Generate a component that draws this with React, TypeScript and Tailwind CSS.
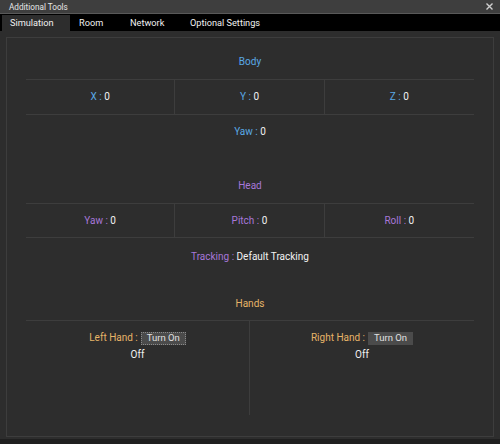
import React from "react";

const font = { fontFamily: 'Roboto, "Liberation Sans", Arial, sans-serif' };

function Field({ label, value, color }: { label: string; value: string; color: string }) {
  return (
    <span className="whitespace-nowrap">
      <span className={color}>{label} : </span>
      <span className="text-[#f2f2f2]">{value}</span>
    </span>
  );
}

function TurnOnButton({ focused }: { focused?: boolean }) {
  return (
    <span
      className={`ml-[3px] inline-flex h-[13px] w-[45px] items-center justify-center bg-[#4b4b4b] text-[9.5px] text-[#e0e0e0] ${
        focused ? "border border-dotted border-[#8a8a8a]" : "border border-[#4b4b4b]"
      }`}
    >
      Turn On
    </span>
  );
}

export default function App() {
  const blue = "text-[#5aa9e6]";
  const purple = "text-[#a777d9]";
  const gold = "text-[#e6b468]";

  return (
    <div className="w-[500px] h-[444px] bg-[#2d2d2d] flex flex-col overflow-hidden text-[10px] leading-[14px]" style={font}>
      {/* Title bar */}
      <div className="h-[14px] shrink-0 bg-[#3e3e3e] border-b border-[#595959] flex items-center justify-between pl-[9px] pr-[7px]">
        <span className="text-[8.2px] leading-[12px] text-[#e6e6e6]">Additional Tools</span>
        <svg width="7" height="7" viewBox="0 0 7 7" className="mt-[-1px]">
          <path d="M0.5 0.5 L6.5 6.5 M6.5 0.5 L0.5 6.5" stroke="#cfcfcf" strokeWidth="1.4" />
        </svg>
      </div>

      {/* Tabs */}
      <div className="h-[17px] shrink-0 bg-black flex items-end pl-[2px] text-[9.2px] text-[#f0f0f0]">
        <div className="h-[16px] w-[68px] bg-[#2d2d2d] pl-[8px] flex items-center">Simulation</div>
        <div className="h-[16px] w-[51px] pl-[9px] flex items-center">Room</div>
        <div className="h-[16px] w-[60px] pl-[9px] flex items-center">Network</div>
        <div className="h-[16px] pl-[9px] flex items-center">Optional Settings</div>
      </div>

      {/* Content */}
      <div className="flex-1 px-[6px] pt-[6px] pb-[2px] flex flex-col">
        <div className="flex-1 border border-[#3d3d3d] px-[19px] text-center">
          {/* Body */}
          <div className={`h-[41px] pt-[17px] ${blue}`}>Body</div>
          <div className="grid grid-cols-3 h-[36px] border-y border-[#3d3d3d]">
            <div className="flex items-center justify-center border-r border-[#3d3d3d]">
              <Field label="X" value="0" color={blue} />
            </div>
            <div className="flex items-center justify-center border-r border-[#3d3d3d]">
              <Field label="Y" value="0" color={blue} />
            </div>
            <div className="flex items-center justify-center">
              <Field label="Z" value="0" color={blue} />
            </div>
          </div>
          <div className="h-[30px] pt-[10px]">
            <Field label="Yaw" value="0" color={blue} />
          </div>

          {/* Head */}
          <div className={`h-[58px] pt-[34px] ${purple}`}>Head</div>
          <div className="grid grid-cols-3 h-[35px] border-y border-[#3d3d3d]">
            <div className="flex items-center justify-center border-r border-[#3d3d3d]">
              <Field label="Yaw" value="0" color={purple} />
            </div>
            <div className="flex items-center justify-center border-r border-[#3d3d3d]">
              <Field label="Pitch" value="0" color={purple} />
            </div>
            <div className="flex items-center justify-center">
              <Field label="Roll" value="0" color={purple} />
            </div>
          </div>
          <div className="h-[30px] pt-[12px]">
            <Field label="Tracking" value="Default Tracking" color={purple} />
          </div>

          {/* Hands */}
          <div className={`h-[52px] pt-[29px] ${gold}`}>Hands</div>
          <div className="grid grid-cols-2 h-[95px] border-t border-[#3d3d3d]">
            <div className="border-r border-[#3d3d3d] pt-[10px] flex flex-col items-center">
              <div className="flex items-center h-[14px]">
                <span className={gold}>Left Hand :</span>
                <TurnOnButton focused />
              </div>
              <div className="mt-[3px] text-[#f2f2f2]">Off</div>
            </div>
            <div className="pt-[10px] flex flex-col items-center">
              <div className="flex items-center h-[14px]">
                <span className={gold}>Right Hand :</span>
                <TurnOnButton />
              </div>
              <div className="mt-[3px] text-[#f2f2f2]">Off</div>
            </div>
          </div>
        </div>
      </div>
      <div className="h-[5px] shrink-0 bg-[#1f1f1f]" />
    </div>
  );
}
